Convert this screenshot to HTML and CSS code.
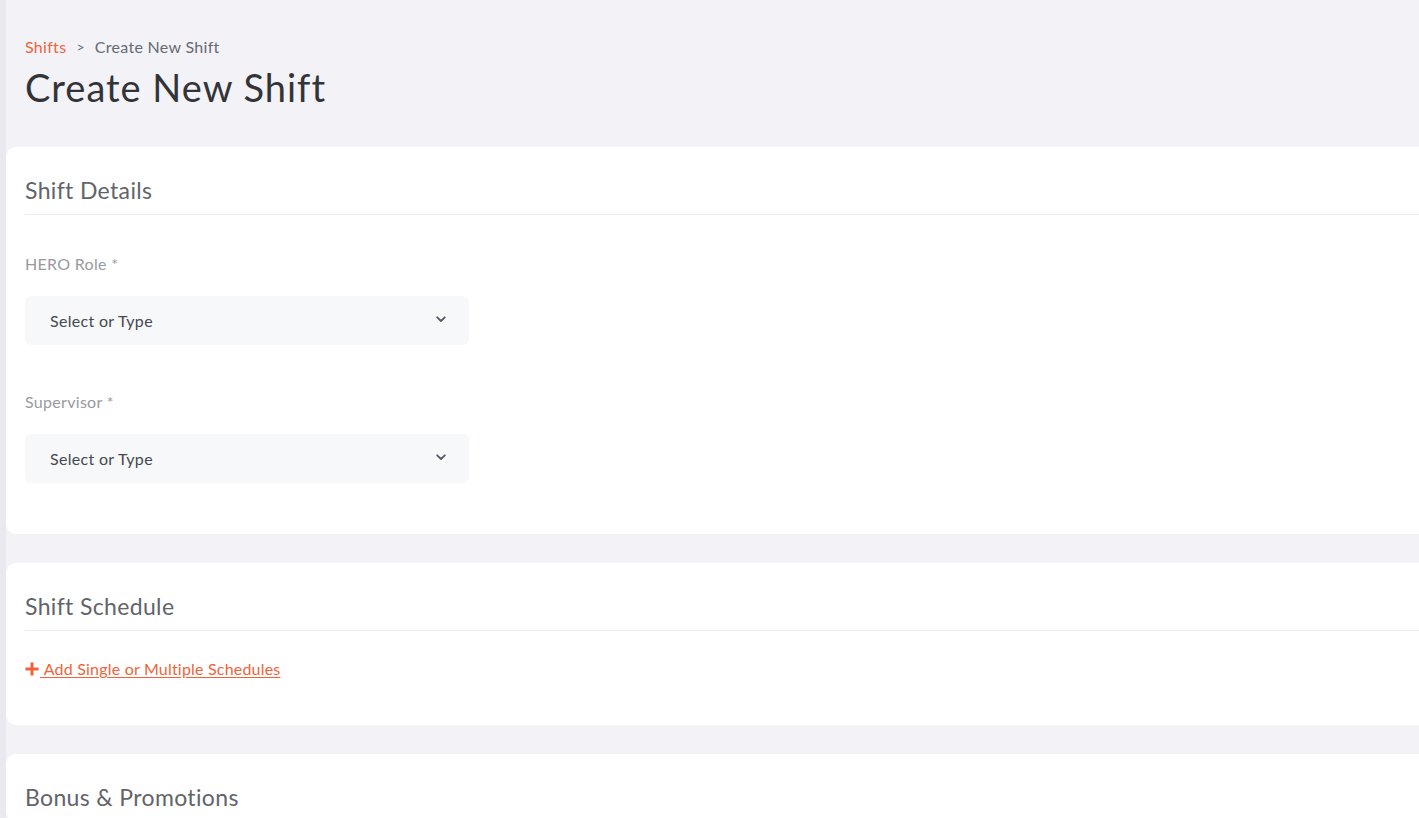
FILE: index.html
```html
<!DOCTYPE html>
<html>
<head>
<meta charset="utf-8">
<link rel="stylesheet" href="styles.css">
</head>
<body>
<div class="page">
  <div class="header">
    <div class="crumbs"><a class="crumb-link">Shifts</a><span class="sep">&gt;</span><span class="crumb-current">Create New Shift</span></div>
    <h1 class="title">Create New Shift</h1>
  </div>

  <section class="card">
    <h2 class="card-title">Shift Details</h2>
    <div class="card-body">
      <div class="field">
        <label class="field-label">HERO Role *</label>
        <div class="select"><span>Select or Type</span>
          <svg class="chev" width="10" height="7" viewBox="0 0 10 7"><path d="M1.2 1.3 L5 5 L8.8 1.3" fill="none" stroke="#555a66" stroke-width="1.8" stroke-linecap="round" stroke-linejoin="round"/></svg>
        </div>
      </div>
      <div class="field">
        <label class="field-label">Supervisor *</label>
        <div class="select"><span>Select or Type</span>
          <svg class="chev" width="10" height="7" viewBox="0 0 10 7"><path d="M1.2 1.3 L5 5 L8.8 1.3" fill="none" stroke="#555a66" stroke-width="1.8" stroke-linecap="round" stroke-linejoin="round"/></svg>
        </div>
      </div>
    </div>
  </section>

  <section class="card">
    <h2 class="card-title">Shift Schedule</h2>
    <div class="card-body schedule">
      <a class="add-link"><svg class="plus" width="14" height="14" viewBox="0 0 14 14"><path d="M7 0.5 V13.5 M0.5 7 H13.5" stroke="#f0633a" stroke-width="3"/></svg><span> Add Single or Multiple Schedules</span></a>
    </div>
  </section>

  <section class="card">
    <h2 class="card-title">Bonus &amp; Promotions</h2>
  </section>
</div>
</body>
</html>
```

FILE: styles.css
```css
* { box-sizing: border-box; }
html, body { margin: 0; padding: 0; }
body {
  background: #f2f2f7;
  font-family: Lato, "Noto Sans", sans-serif;
  overflow: hidden;
  height: 818px;
  border-left: 6px solid #e9eaef;
}
.page {
  width: 1440px;
}
.header {
  padding: 37px 0 0 19px;
}
.crumbs {
  font-size: 16px;
  line-height: 20px;
  letter-spacing: 0.3px;
  color: #666a73;
  display: flex;
  align-items: center;
}
.crumb-link { color: #f0633a; }
.sep { margin: 0 10px; font-size: 14px; }
.title {
  margin: 8px 0 0;
  font-size: 38px;
  font-weight: 400;
  line-height: 44px;
  color: #333438;
  letter-spacing: 1px;
}
.card {
  background: #fff;
  border-radius: 10px;
  margin-top: 38px;
  padding: 28px 0 0 19px;
}
.card + .card { margin-top: 29px; }
.card-title {
  margin: 0;
  font-size: 23px;
  font-weight: 400;
  line-height: 30px;
  letter-spacing: 0.35px;
  color: #626469;
  padding-bottom: 9px;
  border-bottom: 1px solid #ececef;
}
.card-body {
  padding: 39px 0 51px;
  display: flex;
  flex-direction: column;
  gap: 47px;
}
.field { display: flex; flex-direction: column; }
.field-label {
  font-size: 16px;
  line-height: 20px;
  letter-spacing: 0.3px;
  color: #999a9e;
  margin-bottom: 22px;
}
.select {
  width: 444px;
  height: 49px;
  background: #f7f8fa;
  border-radius: 6px;
  display: flex;
  align-items: center;
  justify-content: space-between;
  padding: 0 23px 0 25px;
  font-size: 16px;
  letter-spacing: 0.3px;
  color: #454850;
}
.chev { margin-top: -2px; }
.schedule { padding: 28px 0 46px; }
.add-link {
  color: #f0633a;
  font-size: 16px;
  line-height: 20px;
  letter-spacing: 0.2px;
  display: flex;
  align-items: center;
}
.add-link span { text-decoration: underline; text-underline-offset: 2px; white-space: pre; }
.plus { margin-right: 1px; }
```
